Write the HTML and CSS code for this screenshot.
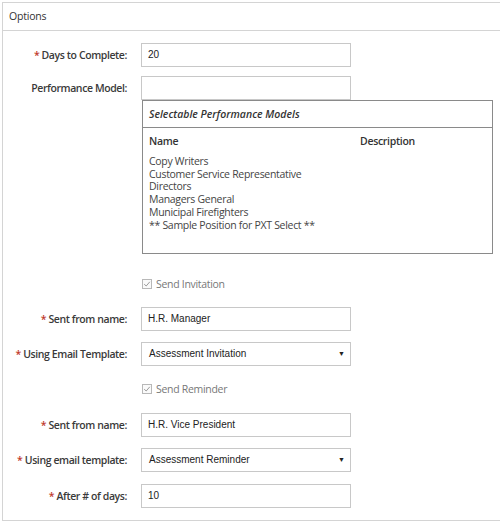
FILE: index.html
```html
<!DOCTYPE html>
<html>
<head>
<meta charset="utf-8">
<link rel="stylesheet" href="styles.css">
</head>
<body>
<div class="panel">
  <div class="panel-head">Options</div>
  <div class="panel-body">
    <div class="row r1">
      <label class="lbl"><span class="req">*</span> Days to Complete:</label>
      <div class="field"><div class="input">20</div></div>
    </div>
    <div class="row r2">
      <label class="lbl">Performance Model:</label>
      <div class="field">
        <div class="input"></div>
        <div class="models">
          <div class="models-head">Selectable Performance Models</div>
          <div class="models-body">
            <div class="cols"><span class="c-name">Name</span><span class="c-desc">Description</span></div>
            <ul class="list">
              <li>Copy Writers</li>
              <li>Customer Service Representative</li>
              <li>Directors</li>
              <li>Managers General</li>
              <li>Municipal Firefighters</li>
              <li>** Sample Position for PXT Select **</li>
            </ul>
          </div>
        </div>
      </div>
    </div>
    <div class="row check-row c1">
      <div class="lbl"></div>
      <div class="field check"><span class="cb"><svg width="8" height="8" viewBox="0 0 8 8"><path d="M1.2 4.2 L3.2 6 L6.8 1.8" fill="none" stroke="#9a9a9a" stroke-width="1"/></svg></span>Send Invitation</div>
    </div>
    <div class="row r3">
      <label class="lbl"><span class="req">*</span> Sent from name:</label>
      <div class="field"><div class="input">H.R. Manager</div></div>
    </div>
    <div class="row r4">
      <label class="lbl"><span class="req">*</span> Using Email Template:</label>
      <div class="field"><div class="input select">Assessment Invitation<span class="arrow">▼</span></div></div>
    </div>
    <div class="row check-row c2">
      <div class="lbl"></div>
      <div class="field check"><span class="cb"><svg width="8" height="8" viewBox="0 0 8 8"><path d="M1.2 4.2 L3.2 6 L6.8 1.8" fill="none" stroke="#9a9a9a" stroke-width="1"/></svg></span>Send Reminder</div>
    </div>
    <div class="row r5">
      <label class="lbl"><span class="req">*</span> Sent from name:</label>
      <div class="field"><div class="input">H.R. Vice President</div></div>
    </div>
    <div class="row r6">
      <label class="lbl"><span class="req">*</span> Using email template:</label>
      <div class="field"><div class="input select">Assessment Reminder<span class="arrow">▼</span></div></div>
    </div>
    <div class="row r7">
      <label class="lbl"><span class="req">*</span> After # of days:</label>
      <div class="field"><div class="input">10</div></div>
    </div>
  </div>
</div>
</body>
</html>
```

FILE: styles.css
```css
* { box-sizing: border-box; }
html, body { margin: 0; padding: 0; background: #fff; }
body {
  padding: 2px 0 0 2px;
  font-family: "Open Sans", "Liberation Sans", sans-serif;
  color: #333;
  overflow: hidden;
}
.panel {
  width: 510px;
  height: 519px;
  border: 1px solid #d4d4d4;
}
.panel-head {
  height: 28px;
  border-bottom: 1px solid #d4d4d4;
  padding: 6px 0 0 6px;
  font-size: 10.5px;
  letter-spacing: -0.2px;
  color: #333;
  background: #fff;
}
.panel-body { padding-top: 12px; }
.row { display: flex; align-items: flex-start; }
.lbl {
  width: 124px;
  margin-right: 14px;
  text-align: right;
  white-space: nowrap;
  font-size: 10.5px;
  letter-spacing: -0.4px;
  font-weight: 600;
  color: #3a3a3a;
  line-height: 24px;
  flex: none;
}
.req { color: #c0392b; font-weight: 600; }
.field { flex: none; }
.input {
  width: 210px;
  height: 24px;
  border: 1px solid #c8c8c8;
  font-family: "Liberation Sans", Arial, sans-serif;
  font-size: 10px;
  color: #222;
  line-height: 22px;
  padding-left: 6px;
  position: relative;
}
.select { padding-left: 7px; }
.arrow {
  position: absolute;
  right: 5px;
  top: 0;
  font-size: 7px;
  color: #222;
}
.r2 { margin-top: 9px; }
.models {
  width: 351px;
  height: 154px;
  margin-left: 1px;
  border: 1px solid #8a8a8a;
}
.models-head {
  height: 27px;
  border-bottom: 1px solid #8a8a8a;
  padding: 6px 0 0 6px;
  font-size: 10.5px;
  font-style: italic;
  font-weight: 600;
  color: #333;
}
.models-body { padding: 6px 0 0 6px; font-size: 10.5px; letter-spacing: -0.3px; }
.cols { display: flex; font-weight: 600; color: #333; height: 21px; }
.c-name { width: 211px; }
.list { list-style: none; margin: 0; padding: 0; color: #444; line-height: 12.7px; }
.check-row .lbl { line-height: 18px; }
.check {
  display: flex;
  align-items: center;
  height: 18px;
  font-size: 10.5px;
  letter-spacing: -0.3px;
  color: #777;
  padding-left: 1px;
}
.cb {
  width: 10px;
  height: 10px;
  border: 1px solid #b8b8b8;
  margin-right: 4px;
  display: flex;
  align-items: center;
  justify-content: center;
  background: #fafafa;
}
.c1 { margin-top: 21px; }
.r3 { margin-top: 14px; }
.r4 { margin-top: 11px; }
.c2 { margin-top: 14px; }
.r5 { margin-top: 15px; }
.r6 { margin-top: 11px; }
.r7 { margin-top: 12px; }
```
